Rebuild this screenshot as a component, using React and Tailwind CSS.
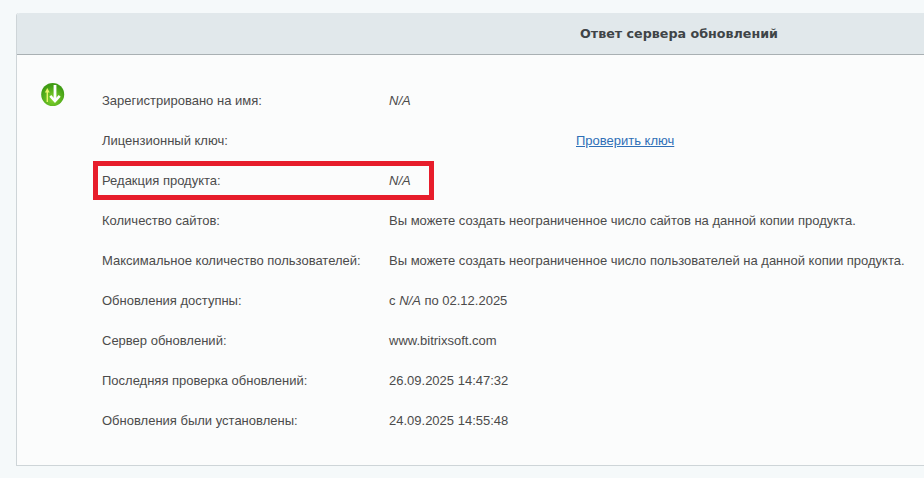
const ROWS = [
  ['Зарегистрировано на имя:', <i>N/A</i>],
  ['Лицензионный ключ:', <span className="block pl-[187px] text-[#2e6fb7] underline">Проверить ключ</span>],
  ['Редакция продукта:', <i>N/A</i>],
  ['Количество сайтов:', 'Вы можете создать неограниченное число сайтов на данной копии продукта.'],
  ['Максимальное количество пользователей:', 'Вы можете создать неограниченное число пользователей на данной копии продукта.'],
  ['Обновления доступны:', <>с <i>N/A</i> по 02.12.2025</>],
  ['Сервер обновлений:', 'www.bitrixsoft.com'],
  ['Последняя проверка обновлений:', '26.09.2025 14:47:32'],
  ['Обновления были установлены:', '24.09.2025 14:55:48'],
]

export default function App() {
  return (
    <div className="h-[478px] overflow-hidden bg-[#f5f9fa] pl-4 pt-[13px] font-['Liberation_Sans',sans-serif] text-[13px] text-[#4b4b4b]">
      <div className="w-[920px] rounded-tl-[3px] border-l border-[#ced5d8]">
        <div className="flex h-[42px] items-center rounded-tl-[3px] border-b border-[#a9b0b3] bg-[#e1e8eb] pl-[563px] font-['DejaVu_Sans',sans-serif] text-[12.7px] font-bold text-[#3f4447]">
          Ответ сервера обновлений
        </div>
        <div className="flex h-[411px] border-b border-[#ced5d8] bg-[#fbfcfc] pl-6 pt-[26px]">
          <div className="h-6 w-[61px] shrink-0">
            <svg width="25" height="27" viewBox="0 0 25 27">
              <defs>
                <radialGradient id="ball" cx="50%" cy="70%" r="60%">
                  <stop offset="0%" stopColor="#86d62f" />
                  <stop offset="100%" stopColor="#3f9c14" />
                </radialGradient>
              </defs>
              <circle cx="11.7" cy="13.5" r="11.5" fill="url(#ball)" />
              <path d="M6.3 21V10" stroke="#e9f56a" strokeWidth="1.4" fill="none" />
              <path d="M3.9 11.5 6.3 7l2.4 4.5z" fill="#e9f56a" />
              <path d="M14 4v15" stroke="#fff" strokeWidth="2.8" fill="none" />
              <path d="M9.3 14.8 14 20l4.7-5.2" stroke="#fff" strokeWidth="2.6" fill="none" />
            </svg>
          </div>
          <div className="flex-1">
            {ROWS.map(([label, value]) => (
              <div key={label} className="flex h-10 items-center">
                <div className="w-[287px] shrink-0">{label}</div>
                <div className="flex-1 whitespace-nowrap">{value}</div>
              </div>
            ))}
          </div>
        </div>
      </div>
      <div className="pointer-events-none absolute left-[93px] top-[161px] h-[39px] w-[341px] border-[5px] border-[#e71d2b]" />
    </div>
  )
}
